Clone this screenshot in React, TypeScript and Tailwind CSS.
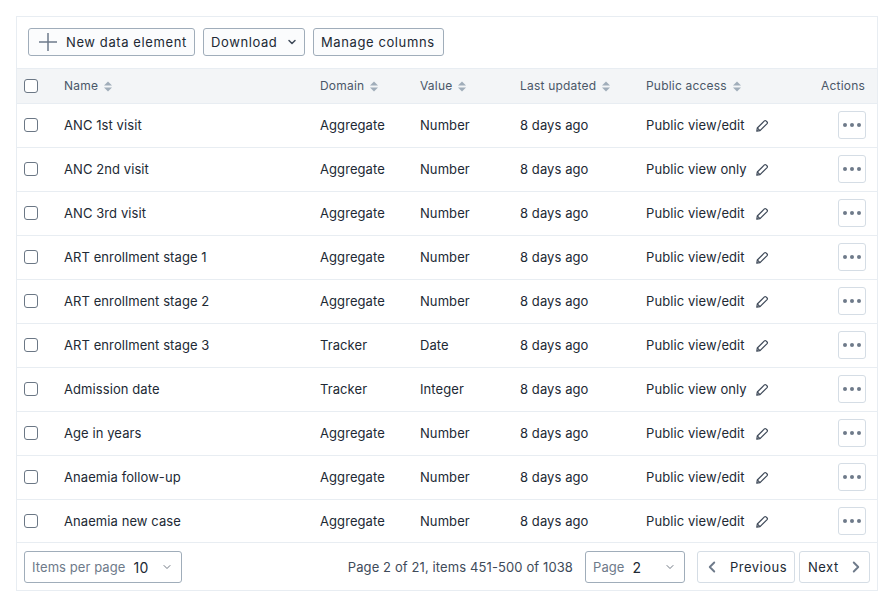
import { ChevronDown, ChevronLeft, ChevronRight } from "lucide-react";

interface DataElement {
  name: string;
  domain: string;
  value: string;
  access: string;
}

const rows: DataElement[] = [
  { name: "ANC 1st visit", domain: "Aggregate", value: "Number", access: "Public view/edit" },
  { name: "ANC 2nd visit", domain: "Aggregate", value: "Number", access: "Public view only" },
  { name: "ANC 3rd visit", domain: "Aggregate", value: "Number", access: "Public view/edit" },
  { name: "ART enrollment stage 1", domain: "Aggregate", value: "Number", access: "Public view/edit" },
  { name: "ART enrollment stage 2", domain: "Aggregate", value: "Number", access: "Public view/edit" },
  { name: "ART enrollment stage 3", domain: "Tracker", value: "Date", access: "Public view/edit" },
  { name: "Admission date", domain: "Tracker", value: "Integer", access: "Public view only" },
  { name: "Age in years", domain: "Aggregate", value: "Number", access: "Public view/edit" },
  { name: "Anaemia follow-up", domain: "Aggregate", value: "Number", access: "Public view/edit" },
  { name: "Anaemia new case", domain: "Aggregate", value: "Number", access: "Public view/edit" },
];

const Checkbox = () => (
  <span className="mb-[1px] block h-[14px] w-[14px] rounded-[3px] border border-[#6b7785] bg-white" />
);

const SortIcon = () => (
  <svg width="8" height="11" viewBox="0 0 8 11" className="ml-[6px] shrink-0" fill="#a0adba">
    <path d="M4 0.5 L8 4.5 L0 4.5 Z" />
    <path d="M4 10.5 L0 6.5 L8 6.5 Z" />
  </svg>
);

const PencilIcon = () => (
  <svg width="14" height="14" viewBox="0 0 14 14" className="ml-[9px] shrink-0" fill="none" stroke="#404b5a" strokeWidth="1.2" strokeLinejoin="round">
    <path d="M1.8 12.2 L2.3 9 L9.4 1.9 Q10.2 1.2 11 1.9 L12.1 3 Q12.8 3.8 12.1 4.6 L5 11.7 Z" />
    <path d="M2.3 9 L5 11.7" />
  </svg>
);

const HeadCell = ({ label }: { label: string }) => (
  <div className="flex items-center">
    <span>{label}</span>
    <SortIcon />
  </div>
);

const App = () => {
  return (
    <div className="h-[607px] w-[894px] bg-white pl-4 pt-4 font-['Inter',sans-serif] text-[13px] tracking-[0.08px] text-[#212934]">
      <div className="flex h-[575px] w-[862px] flex-col border border-[#e8edf2]">
        {/* toolbar */}
        <div className="flex h-[52px] items-center gap-2 border-b border-[#e8edf2] pb-[1px] pl-[11px] tracking-[0.6px]">
          <button className="flex h-[28px] w-[167px] items-center rounded-[3px] border border-[#a0adba] bg-[#fbfcfd] pl-[10px] pt-[2px] text-[#212934]">
            <svg width="18" height="18" viewBox="0 0 18 18" className="mb-[2px] mr-[9px] shrink-0" stroke="#6e7a8a" strokeWidth="1.5">
              <path d="M9 0 V18 M0 9 H18" />
            </svg>
            New data element
          </button>
          <button className="flex h-[28px] w-[102px] items-center rounded-[3px] border border-[#a0adba] bg-[#fbfcfd] pl-[7px] pt-[2px]">
            Download
            <ChevronDown size={12} strokeWidth={3} className="mb-[2px] ml-[9px] text-[#404b5a]" />
          </button>
          <button className="flex h-[28px] w-[131px] items-center rounded-[3px] border border-[#a0adba] bg-[#fbfcfd] pl-[7px] pt-[2px]">
            Manage columns
          </button>
        </div>

        {/* header */}
        <div className="grid h-[35px] grid-cols-[47px_256px_100px_100px_126px_1fr_auto] items-center border-b border-[#e8edf2] bg-[#f3f5f7] text-[12px] tracking-[0.2px] text-[#4a5768]">
          <div className="pl-[7px]">
            <Checkbox />
          </div>
          <HeadCell label="Name" />
          <HeadCell label="Domain" />
          <HeadCell label="Value" />
          <HeadCell label="Last updated" />
          <HeadCell label="Public access" />
          <div className="pr-[12px]">Actions</div>
        </div>

        {/* rows */}
        {rows.map((row, i) => (
          <div
            key={row.name}
            className={`grid h-[44px] shrink-0 grid-cols-[47px_256px_100px_100px_126px_1fr_auto] items-center ${i === rows.length - 1 ? "pb-[1px]" : "border-b border-[#e8edf2]"}`}
          >
            <div className="pl-[7px]">
              <Checkbox />
            </div>
            <div>{row.name}</div>
            <div>{row.domain}</div>
            <div>{row.value}</div>
            <div>8 days ago</div>
            <div className="flex items-center">
              <span className="w-[100px] whitespace-nowrap">{row.access}</span>
              <PencilIcon />
            </div>
            <div className="pr-[11px]">
              <button className="mb-[1px] flex h-[28px] w-[28px] items-center justify-center gap-[3px] rounded-[3px] border border-[#d5dde5] bg-white">
                <span className="h-[4px] w-[4px] rounded-full bg-[#6e7a8a]" />
                <span className="h-[4px] w-[4px] rounded-full bg-[#6e7a8a]" />
                <span className="h-[4px] w-[4px] rounded-full bg-[#6e7a8a]" />
              </button>
            </div>
          </div>
        ))}

        {/* footer */}
        <div className="-mt-[2px] flex flex-1 items-center border-t border-[#e8edf2] pl-[7px] pr-[7px] pt-[1px]">
          <div className="flex h-[32px] w-[158px] items-center rounded-[3px] border border-[#a0adba] pl-[7px]">
            <span className="pt-[2px] text-[#6e7a8a]">Items per page</span>
            <span className="ml-[8px] text-[14px] tracking-[0.3px]">10</span>
            <ChevronDown size={12} strokeWidth={1.5} className="ml-auto mr-[8px] text-[#404b5a]" />
          </div>
          <div className="ml-auto pt-[2px] tracking-[0.11px] text-[#404b5a]">Page 2 of 21, items 451-500 of 1038</div>
          <div className="ml-3 flex h-[32px] w-[100px] items-center rounded-[3px] border border-[#a0adba] pl-[7px]">
            <span className="pt-[2px] text-[#6e7a8a]">Page</span>
            <span className="ml-[8px] text-[14px]">2</span>
            <ChevronDown size={12} strokeWidth={1.5} className="ml-auto mr-[8px] text-[#404b5a]" />
          </div>
          <button className="ml-3 flex h-[32px] w-[98px] items-center rounded-[3px] border border-[#d5dde5] pl-[5px] tracking-[0.5px]">
            <ChevronLeft size={18} strokeWidth={2.5} className="mr-[9px] text-[#6e7a8a]" />
            <span className="pt-[2px]">Previous</span>
          </button>
          <button className="ml-1 flex h-[32px] w-[71px] items-center rounded-[3px] border border-[#d5dde5] pl-[8px] tracking-[0.5px]">
            <span className="pt-[2px]">Next</span>
            <ChevronRight size={18} strokeWidth={2.5} className="ml-[8px] text-[#6e7a8a]" />
          </button>
        </div>
      </div>
    </div>
  );
};

export default App;
